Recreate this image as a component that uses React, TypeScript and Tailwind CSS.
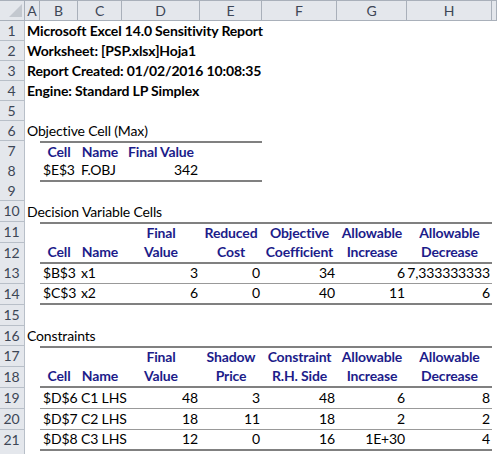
import React from "react";

const COLS = "grid grid-cols-[25px_15px_38px_44px_78px_62px_75px_70px_85px_1fr]";
const BLUE = "text-[#1c1c8a]";

type Cell = { t: string; a?: "l" | "r" | "c"; h?: boolean };
type RowDef = { n: number; h: string; title?: string; bold?: boolean; cells?: (Cell | null)[]; line?: "top" | "head" | "thin" | "bottom"; hideNum?: boolean };

// cells map to columns B..H
const rows: RowDef[] = [
  { n: 1, h: "h-[20px]", title: "Microsoft Excel 14.0 Sensitivity Report", bold: true },
  { n: 2, h: "h-[20px]", title: "Worksheet: [PSP.xlsx]Hoja1", bold: true },
  { n: 3, h: "h-[20px]", title: "Report Created: 01/02/2016 10:08:35", bold: true },
  { n: 4, h: "h-[20px]", title: "Engine: Standard LP Simplex", bold: true },
  { n: 5, h: "h-[20px]" },
  { n: 6, h: "h-[20px]", title: "Objective Cell (Max)" },
  { n: 7, h: "h-[20px]", line: "top", cells: [{ t: "Cell", a: "c", h: true }, { t: "Name", a: "c", h: true }, { t: "Final Value", a: "c", h: true }, null] },
  { n: 8, h: "h-[20px]", line: "bottom", cells: [{ t: "$E$3" }, { t: "F.OBJ" }, { t: "342", a: "r" }, null] },
  { n: 9, h: "h-[20px]" },
  { n: 10, h: "h-[21px]", title: "Decision Variable Cells" },
  { n: 11, h: "h-[21px]", line: "top", cells: [null, null, { t: "Final", a: "c", h: true }, { t: "Reduced", a: "c", h: true }, { t: "Objective", a: "c", h: true }, { t: "Allowable", a: "c", h: true }, { t: "Allowable", a: "c", h: true }] },
  { n: 12, h: "h-[20px]", line: "head", cells: [{ t: "Cell", a: "c", h: true }, { t: "Name", a: "c", h: true }, { t: "Value", a: "c", h: true }, { t: "Cost", a: "c", h: true }, { t: "Coefficient", a: "c", h: true }, { t: "Increase", a: "c", h: true }, { t: "Decrease", a: "c", h: true }] },
  { n: 13, h: "h-[21px]", line: "thin", cells: [{ t: "$B$3" }, { t: "x1" }, { t: "3", a: "r" }, { t: "0", a: "r" }, { t: "34", a: "r" }, { t: "6", a: "r" }, { t: "7,333333333", a: "r" }] },
  { n: 14, h: "h-[21px]", line: "bottom", cells: [{ t: "$C$3" }, { t: "x2" }, { t: "6", a: "r" }, { t: "0", a: "r" }, { t: "40", a: "r" }, { t: "11", a: "r" }, { t: "6", a: "r" }] },
  { n: 15, h: "h-[21px]" },
  { n: 16, h: "h-[20px]", title: "Constraints" },
  { n: 17, h: "h-[21px]", line: "top", cells: [null, null, { t: "Final", a: "c", h: true }, { t: "Shadow", a: "c", h: true }, { t: "Constraint", a: "c", h: true }, { t: "Allowable", a: "c", h: true }, { t: "Allowable", a: "c", h: true }] },
  { n: 18, h: "h-[21px]", line: "head", cells: [{ t: "Cell", a: "c", h: true }, { t: "Name", a: "c", h: true }, { t: "Value", a: "c", h: true }, { t: "Price", a: "c", h: true }, { t: "R.H. Side", a: "c", h: true }, { t: "Increase", a: "c", h: true }, { t: "Decrease", a: "c", h: true }] },
  { n: 19, h: "h-[21px]", line: "thin", cells: [{ t: "$D$6" }, { t: "C1 LHS" }, { t: "48", a: "r" }, { t: "3", a: "r" }, { t: "48", a: "r" }, { t: "6", a: "r" }, { t: "8", a: "r" }] },
  { n: 20, h: "h-[21px]", line: "thin", cells: [{ t: "$D$7" }, { t: "C2 LHS" }, { t: "18", a: "r" }, { t: "11", a: "r" }, { t: "18", a: "r" }, { t: "2", a: "r" }, { t: "2", a: "r" }] },
  { n: 21, h: "h-[20px]", line: "bottom", cells: [{ t: "$D$8" }, { t: "C3 LHS" }, { t: "12", a: "r" }, { t: "0", a: "r" }, { t: "16", a: "r" }, { t: "1E+30", a: "r" }, { t: "4", a: "r" }] },
  { n: 22, h: "h-[20px]", hideNum: true },
];

const lineCls = (l?: RowDef["line"]) =>
  l === "top" ? "border-t-2 border-[#808080]" :
  l === "head" ? "border-b-2 border-[#808080]" :
  l === "thin" ? "border-b border-[#999999]" :
  l === "bottom" ? "border-b-2 border-[#808080]" : "";

function RowHead({ n, hide }: { n: number; hide?: boolean }) {
  return (
    <div className="flex items-center justify-center border-r border-b border-[#b8bfc8] bg-[#e4e7ec] text-[#3d4656] pr-[1px]">
      {hide ? "" : n}
    </div>
  );
}

function SheetRow({ r }: { r: RowDef }) {
  return (
    <div className={`${COLS} ${r.h}`}>
      <RowHead n={r.n} hide={r.hideNum} />
      {r.title ? (
        <div className={`col-span-9 flex items-end pl-[2px] pb-[1px] whitespace-nowrap text-black ${r.bold ? "font-bold" : ""}`}>{r.title}</div>
      ) : r.cells ? (
        <>
          <div />
          {r.cells.map((c, i) => (
            <div
              key={i}
              className={`flex items-end pb-[1px] px-[3px] whitespace-nowrap ${lineCls(r.line)} ${
                c?.a === "r" ? "justify-end pr-[2px]" : c?.a === "c" ? "justify-center" : "justify-start"
              } ${c?.h ? `font-bold ${BLUE}` : "text-black"}`}
            >
              {c?.t}
            </div>
          ))}
        </>
      ) : null}
    </div>
  );
}

export default function App() {
  const letters = ["A", "B", "C", "D", "E", "F", "G", "H", ""];
  return (
    <div className="w-[497px] h-[454px] overflow-hidden bg-white text-[14px] leading-[18px] tracking-[-0.15px]" style={{ fontFamily: "Lato, 'Open Sans', sans-serif" }}>
      <div className={`${COLS} h-[21px] border-t border-[#a9b0ba]`}>
        <div className="relative border-r border-b border-[#a9b0ba] bg-[#e4e7ec]">
          <svg className="absolute right-[2px] bottom-[3px]" width="13" height="13" viewBox="0 0 13 13">
            <polygon points="13,0 13,13 0,13" fill="#c3c8cf" />
          </svg>
        </div>
        {letters.map((l, i) => (
          <div key={i} className="flex items-center justify-center border-r border-b border-[#a9b0ba] bg-[#e4e7ec] text-[#3d4656]">
            {l}
          </div>
        ))}
      </div>
      {rows.map((r) => (
        <SheetRow key={r.n} r={r} />
      ))}
    </div>
  );
}
